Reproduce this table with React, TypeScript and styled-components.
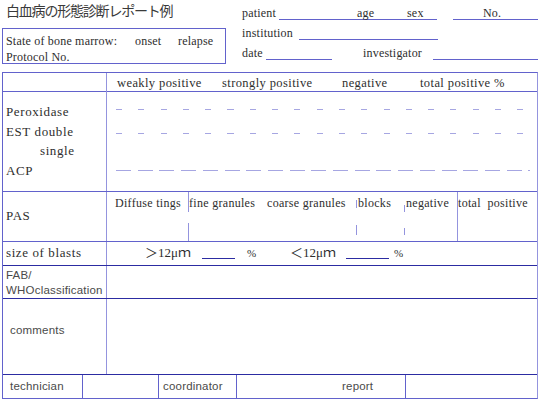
import React from 'react'
import styled, { createGlobalStyle } from 'styled-components'

const INK = '#2e2e2e'
const INK_SOFT = '#4a4a4a'
const LINE = '#6262cc'
const LINE_DARK = '#2c2ca2'
const LINE_SOFT = '#9494de'
const DASH = '#a6a6e2'
const SERIF = `"Liberation Serif", "Noto Sans CJK JP", serif`
const GOTHIC = `"Liberation Sans", "Noto Sans CJK JP", sans-serif`

const GlobalStyle = createGlobalStyle`
  body {
    margin: 0;
    background: #fff;
    color: ${INK};
    font-family: ${SERIF};
    letter-spacing: 0.5px;
  }
`

const Sheet = styled.div`
  width: 540px;
  height: 399px;
  overflow: hidden;
`

const Header = styled.header`
  display: flex;
  height: 72px;
`

const TitleBlock = styled.div`
  width: 226px;
  flex-shrink: 0;
`

const Title = styled.h1`
  margin: 2px 0 0 6px;
  font: 400 14px/16px "Noto Sans CJK JP", sans-serif;
  letter-spacing: -1.2px;
  color: #3a3a3a;
`

const MarrowBox = styled.div`
  margin: 10px 0 0 2px;
  width: 224px;
  height: 36px;
  box-sizing: border-box;
  border: 1px solid ${LINE};
  padding: 4px 0 0 3px;
  font-size: 12px;
  line-height: 16px;
  letter-spacing: 0.2px;
  white-space: nowrap;
`

const InfoBlock = styled.div`
  flex: 1;
  padding: 3px 0 0 16px;
  font-size: 12px;
  letter-spacing: 0.2px;
`

const InfoRow = styled.div`
  height: 20px;
  line-height: 20px;
  white-space: nowrap;
`

const Label = styled.span<{ $w?: number; $ml?: number }>`
  display: inline-block;
  width: ${p => (p.$w ? `${p.$w}px` : 'auto')};
  margin-left: ${p => p.$ml ?? 0}px;
`

// underlined blank to be filled in by hand
const Blank = styled.span<{ $w: number; $pl?: number; $ml?: number; $dark?: boolean }>`
  display: inline-block;
  box-sizing: border-box;
  width: ${p => p.$w}px;
  padding-left: ${p => p.$pl ?? 0}px;
  margin-left: ${p => p.$ml ?? 0}px;
  line-height: 11px;
  border-bottom: 1px solid ${p => (p.$dark ? LINE_DARK : LINE)};
`

const Form = styled.div`
  margin-left: 2px;
  width: 536px;
  box-sizing: border-box;
  border: 1px solid ${LINE};
  border-right-color: ${LINE_SOFT};
`

const Row = styled.div<{ $h: number; $rule?: string }>`
  display: grid;
  grid-template-columns: 104px 1fr;
  height: ${p => p.$h}px;
  box-sizing: border-box;
  border-bottom: 1px solid ${p => p.$rule ?? LINE};
`

const Head = styled.div<{ $pt?: number; $lh?: number; $size?: number; $gothic?: boolean; $pl?: number }>`
  border-right: 1px solid ${LINE_SOFT};
  padding: ${p => p.$pt ?? 0}px 0 0 ${p => p.$pl ?? 3}px;
  font-family: ${p => (p.$gothic ? GOTHIC : SERIF)};
  font-size: ${p => p.$size ?? 13}px;
  line-height: ${p => p.$lh ?? 16}px;
  letter-spacing: ${p => (p.$gothic ? 0.2 : 0.6)}px;
  color: ${p => (p.$gothic ? INK_SOFT : INK)};
  white-space: nowrap;
`

const Indent = styled.span`
  padding-left: 34px;
`

const Scale = styled.div`
  display: grid;
  grid-template-columns: 105px 120px 78px auto;
  padding: 1px 0 0 10px;
  font-size: 12.5px;
  line-height: 18px;
  letter-spacing: 0.4px;
  white-space: nowrap;
`

const Marks = styled.div`
  padding-top: 17px;
`

const DashLine = styled.div<{ $mt?: number; $dash: number; $period: number }>`
  height: 1px;
  margin: ${p => p.$mt ?? 0}px 7px 0 9px;
  background: repeating-linear-gradient(
    90deg,
    ${DASH} 0 ${p => p.$dash}px,
    transparent ${p => p.$dash}px ${p => p.$period}px
  );
`

const PasGrid = styled.div`
  display: grid;
  grid-template-columns: 81px 78px 90px 48px 53px 1fr;
`

const PasCol = styled.div<{ $pl?: number; $gaps?: string; $solid?: boolean }>`
  padding: 3px 0 0 ${p => p.$pl ?? 1}px;
  font-size: 12px;
  line-height: 16px;
  letter-spacing: 0.3px;
  white-space: nowrap;
  border-left: ${p => (p.$solid ? `1px solid ${LINE_SOFT}` : 'none')};
  background: ${p =>
    p.$gaps ? `linear-gradient(to bottom, ${p.$gaps}) left top / 1px 100% no-repeat` : 'none'};
`

const BlastCell = styled.div`
  padding-left: 38px;
  font-size: 13px;
  line-height: 22px;
  letter-spacing: 0;
  white-space: nowrap;
`

const Pct = styled.span<{ $ml: number; $w?: number }>`
  display: inline-block;
  margin-left: ${p => p.$ml}px;
  width: ${p => (p.$w ? `${p.$w}px` : 'auto')};
  font-size: 11px;
`

const BottomRow = styled.div`
  display: grid;
  grid-template-columns: 80px 76px 78px 169px 1fr;
  height: 23px;
`

const BottomCell = styled.div<{ $pl?: number; $open?: boolean }>`
  border-right: ${p => (p.$open ? 'none' : `1px solid ${LINE}`)};
  padding-left: ${p => p.$pl ?? 0}px;
  font-family: ${GOTHIC};
  font-size: 11.5px;
  line-height: 23px;
  letter-spacing: 0.2px;
  color: ${INK_SOFT};
  white-space: nowrap;
`

const gap = (...segs: [number, number][]) =>
  segs
    .map(([a, b], i) => {
      const prev = i === 0 ? 0 : segs[i - 1][1]
      return `transparent ${prev}px ${a}px, ${LINE_SOFT} ${a}px ${b}px`
    })
    .join(', ') + `, transparent ${segs[segs.length - 1][1]}px`

const App = () => (
  <Sheet>
    <GlobalStyle />
    <Header>
      <TitleBlock>
        <Title>白血病の形態診断レポート例</Title>
        <MarrowBox>
          <Label $w={129}>State of bone marrow:</Label>
          <Label $w={43}>onset</Label>
          relapse
          <br />
          Protocol No.
        </MarrowBox>
      </TitleBlock>
      <InfoBlock>
        <InfoRow>
          <Label $w={37}>patient</Label>
          <Blank $w={158} $pl={78}>
            <Label $w={50}>age</Label>sex
          </Blank>
          <Blank $w={85} $pl={30} $ml={16}>No.</Blank>
        </InfoRow>
        <InfoRow>
          <Label $w={57}>institution</Label>
          <Blank $w={139}>&nbsp;</Blank>
        </InfoRow>
        <InfoRow>
          <Label $w={24}>date</Label>
          <Blank $w={66}>&nbsp;</Blank>
          <Label $w={70} $ml={31}>investigator</Label>
          <Blank $w={105}>&nbsp;</Blank>
        </InfoRow>
      </InfoBlock>
    </Header>

    <Form>
      <Row $h={19}>
        <Head />
        <Scale>
          <span>weakly positive</span>
          <span>strongly positive</span>
          <span>negative</span>
          <span>total positive %</span>
        </Scale>
      </Row>

      <Row $h={100}>
        <Head $pt={10} $lh={19.5}>
          Peroxidase
          <br />
          EST double
          <br />
          <Indent>single</Indent>
          <br />
          ACP
        </Head>
        <Marks>
          <DashLine $dash={6} $period={22.3} />
          <DashLine $mt={23} $dash={6} $period={22.3} />
          <DashLine $mt={36} $dash={15} $period={21.7} />
        </Marks>
      </Row>

      <Row $h={50}>
        <Head $pt={16}>PAS</Head>
        <PasGrid>
          <PasCol $pl={8}>Diffuse tings</PasCol>
          <PasCol $gaps={gap([0, 20], [31, 49])}>fine granules</PasCol>
          <PasCol>coarse granules</PasCol>
          <PasCol $pl={2} $gaps={gap([8, 16], [33, 43])}>blocks</PasCol>
          <PasCol $pl={2} $gaps={gap([13, 20], [36, 43])}>negative</PasCol>
          <PasCol $pl={0} $solid>total&nbsp; positive</PasCol>
        </PasGrid>
      </Row>

      <Row $h={24} $rule={LINE_DARK}>
        <Head $lh={22}>size of blasts</Head>
        <BlastCell>
          <Label $w={57}>＞12μｍ</Label>
          <Blank $w={33} $dark>&nbsp;</Blank>
          <Pct $ml={12} $w={43}>%</Pct>
          <Label $w={56}>＜12μｍ</Label>
          <Blank $w={43} $dark>&nbsp;</Blank>
          <Pct $ml={5}>%</Pct>
        </BlastCell>
      </Row>

      <Row $h={33} $rule={LINE_DARK}>
        <Head $gothic $pt={2} $lh={14.5} $size={11.5}>
          FAB/
          <br />
          WHOclassification
        </Head>
        <div />
      </Row>

      <Row $h={76} $rule={LINE_DARK}>
        <Head $gothic $pt={23} $pl={7} $size={11.5}>
          comments
        </Head>
        <div />
      </Row>

      <BottomRow>
        <BottomCell $pl={7}>technician</BottomCell>
        <BottomCell />
        <BottomCell $pl={4}>coordinator</BottomCell>
        <BottomCell $pl={105}>report</BottomCell>
        <BottomCell $open />
      </BottomRow>
    </Form>
  </Sheet>
)

export default App
